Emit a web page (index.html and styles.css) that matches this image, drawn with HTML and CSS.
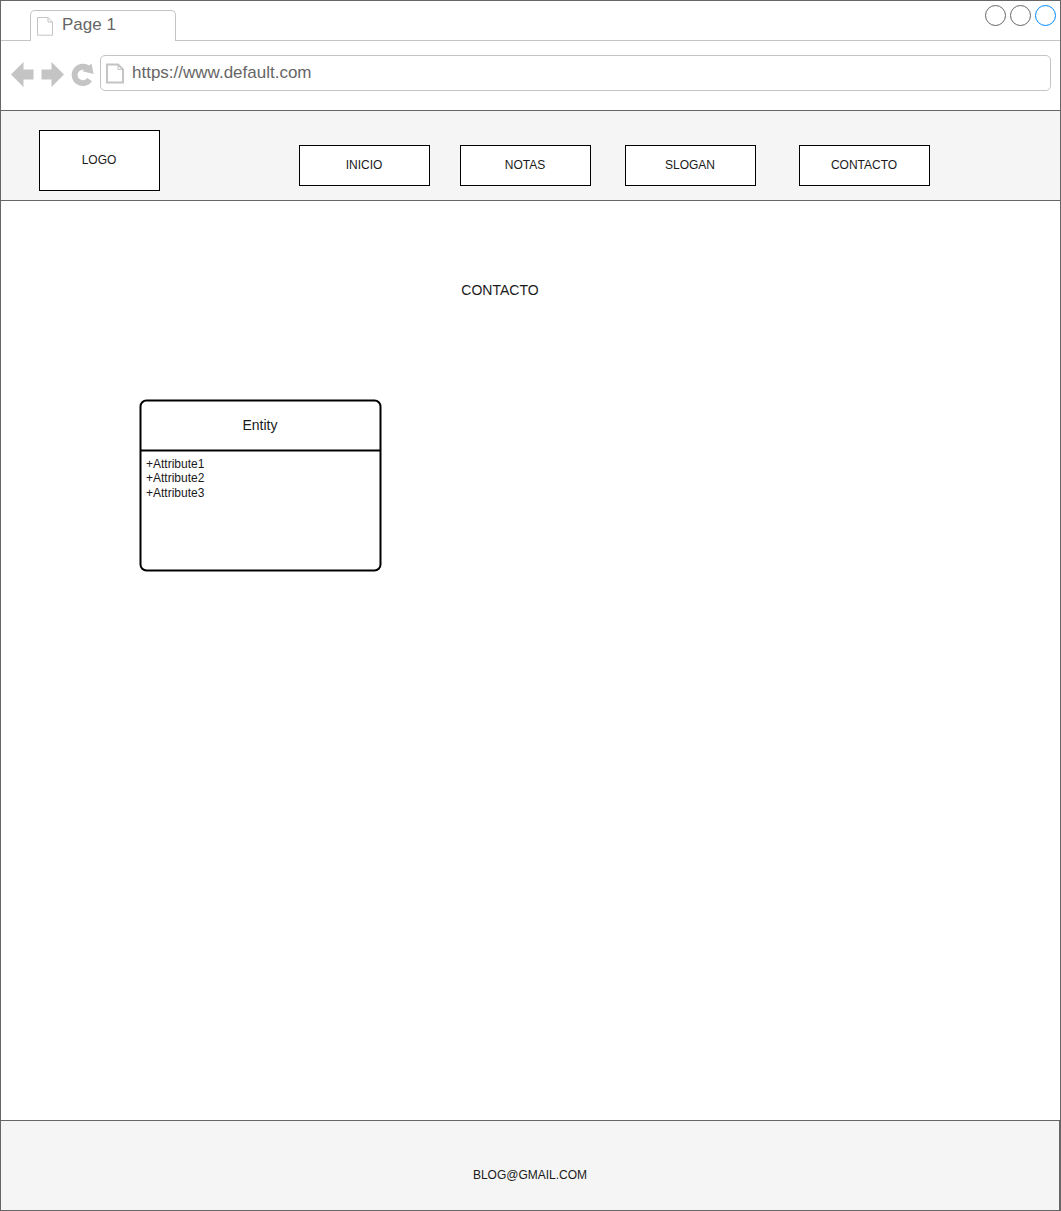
FILE: index.html
```html
<!DOCTYPE html>
<html lang="es">
<head>
<meta charset="utf-8">
<title>Page 1</title>
<link rel="stylesheet" href="styles.css">
</head>
<body>
<div class="window">
  <div class="tabs">
    <div class="tab">
      <svg class="tab-icon" width="18" height="20" viewBox="0 0 18 20"><path d="M1.500 1.500H12L16.500 6V19.200H1.500ZM12 1.500V6H16.500" fill="none" stroke="#c4c4c4"/></svg>
      <span>Page 1</span>
    </div>
    <div class="controls">
      <span class="dot"></span><span class="dot"></span><span class="dot dot-active"></span>
    </div>
  </div>
  <div class="toolbar">
    <svg class="nav-icons" width="90" height="32" viewBox="8 58 90 32">
      <path d="M11 74.500L23.500 62V69.500H33.500V79.500H23.500V87Z" fill="#c4c4c4"/>
      <path d="M64 74.500L51.500 62V69.500H41.500V79.500H51.500V87Z" fill="#c4c4c4"/>
      <path d="M88.700 69.200A8.200 8.200 0 1 0 89.600 79.600" fill="none" stroke="#c4c4c4" stroke-width="5.800"/>
      <path d="M91.500 63.500L93.600 74L82.500 71.200Z" fill="#c4c4c4"/>
    </svg>
    <div class="address">
      <svg width="20" height="22" viewBox="0 0 20 22"><path d="M2 1.500H13L18 6.500V19.500H2Z" fill="none" stroke="#c4c4c4" stroke-width="2"/><path d="M13 1.500V6.500H18" fill="none" stroke="#c4c4c4"/></svg>
      <span>https://www.default.com</span>
    </div>
  </div>
  <header class="header">
    <div class="box logo">LOGO</div>
    <nav class="menu">
      <div class="box item">INICIO</div>
      <div class="box item">NOTAS</div>
      <div class="box item">SLOGAN</div>
      <div class="box item">CONTACTO</div>
    </nav>
  </header>
  <main class="content">
    <h1 class="title">CONTACTO</h1>
    <section class="entity">
      <svg class="entity-frame" width="244" height="174" viewBox="0 0 244 174"><rect x="1.500" y="1.500" width="240" height="170" rx="6"/><path d="M1.500 51.500H241.500"/></svg>
      <h2 class="entity-name">Entity</h2>
      <div class="attributes">
        <div>+Attribute1</div>
        <div>+Attribute2</div>
        <div>+Attribute3</div>
      </div>
    </section>
  </main>
  <footer class="footer">BLOG@GMAIL.COM</footer>
</div>
</body>
</html>
```

FILE: styles.css
```css
* { box-sizing: border-box; }
body { margin: 0; background: #fff; color: #1a1a1a; font: 12px/14.4px "Liberation Sans", Arial, sans-serif; }
.window { width: 1061px; height: 1211px; border: 1px solid #666; display: flex; flex-direction: column; }

.tabs { height: 40px; flex: none; border-bottom: 1px solid #c4c4c4; display: flex; justify-content: space-between; padding: 9px 4px 0 29px; }
.tab { width: 146px; height: 31px; border: 1px solid #c4c4c4; border-bottom: 0; border-radius: 5px 5px 0 0; background: #fff; display: flex; padding: 5px 0 0 5px; font-size: 17px; line-height: 18px; color: #666; }
.tab-icon { margin-right: 8px; }
.controls { display: flex; gap: 4px; margin-top: -5px; }
.dot { width: 21px; height: 21px; border: 1px solid #666; border-radius: 50%; }
.dot-active { border-color: #08f; }

.toolbar { height: 69px; flex: none; display: flex; align-items: flex-start; padding: 14px 9px 0 7px; }
.nav-icons { margin-top: 3px; margin-right: 2px; flex: none; }
.address { flex: 1; height: 36px; border: 1px solid #c4c4c4; border-radius: 5px; display: flex; padding: 7px 0 0 4px; font-size: 17px; line-height: 20px; color: #666; }
.address svg { margin-right: 7px; }

.header { height: 91px; flex: none; background: #f5f5f5; border: solid #666; border-width: 1px 0; display: flex; align-items: flex-start; padding: 19px 0 0 38px; }
.box { background: #fff; border: 1px solid #000; display: flex; align-items: center; justify-content: center; padding-right: 1px; }
.logo { width: 121px; height: 61px; margin-right: 139px; }
.menu { display: grid; grid-template-columns: 161px 165px 174px 131px; padding-top: 15px; }
.item { width: 131px; height: 41px; }

.content { flex: 1; }
.title { margin: 81px 0 0; width: 998px; text-align: center; font-size: 14px; line-height: 17px; font-weight: 400; }
.entity { position: relative; width: 242px; height: 172px; margin: 100px 0 0 138px; }
.entity-frame { position: absolute; left: 0; top: 0; fill: none; stroke: #000; stroke-width: 2; }
.entity-name { margin: 0; height: 51px; padding-top: 1px; font-size: 14px; line-height: 51px; font-weight: 400; text-align: center; }
.attributes { padding: 7px 0 0 7px; }

.footer { height: 90px; flex: none; background: #f5f5f5; border-top: 1px solid #666; border-right: 1px solid #666; text-align: center; padding-top: 47px; }
```
